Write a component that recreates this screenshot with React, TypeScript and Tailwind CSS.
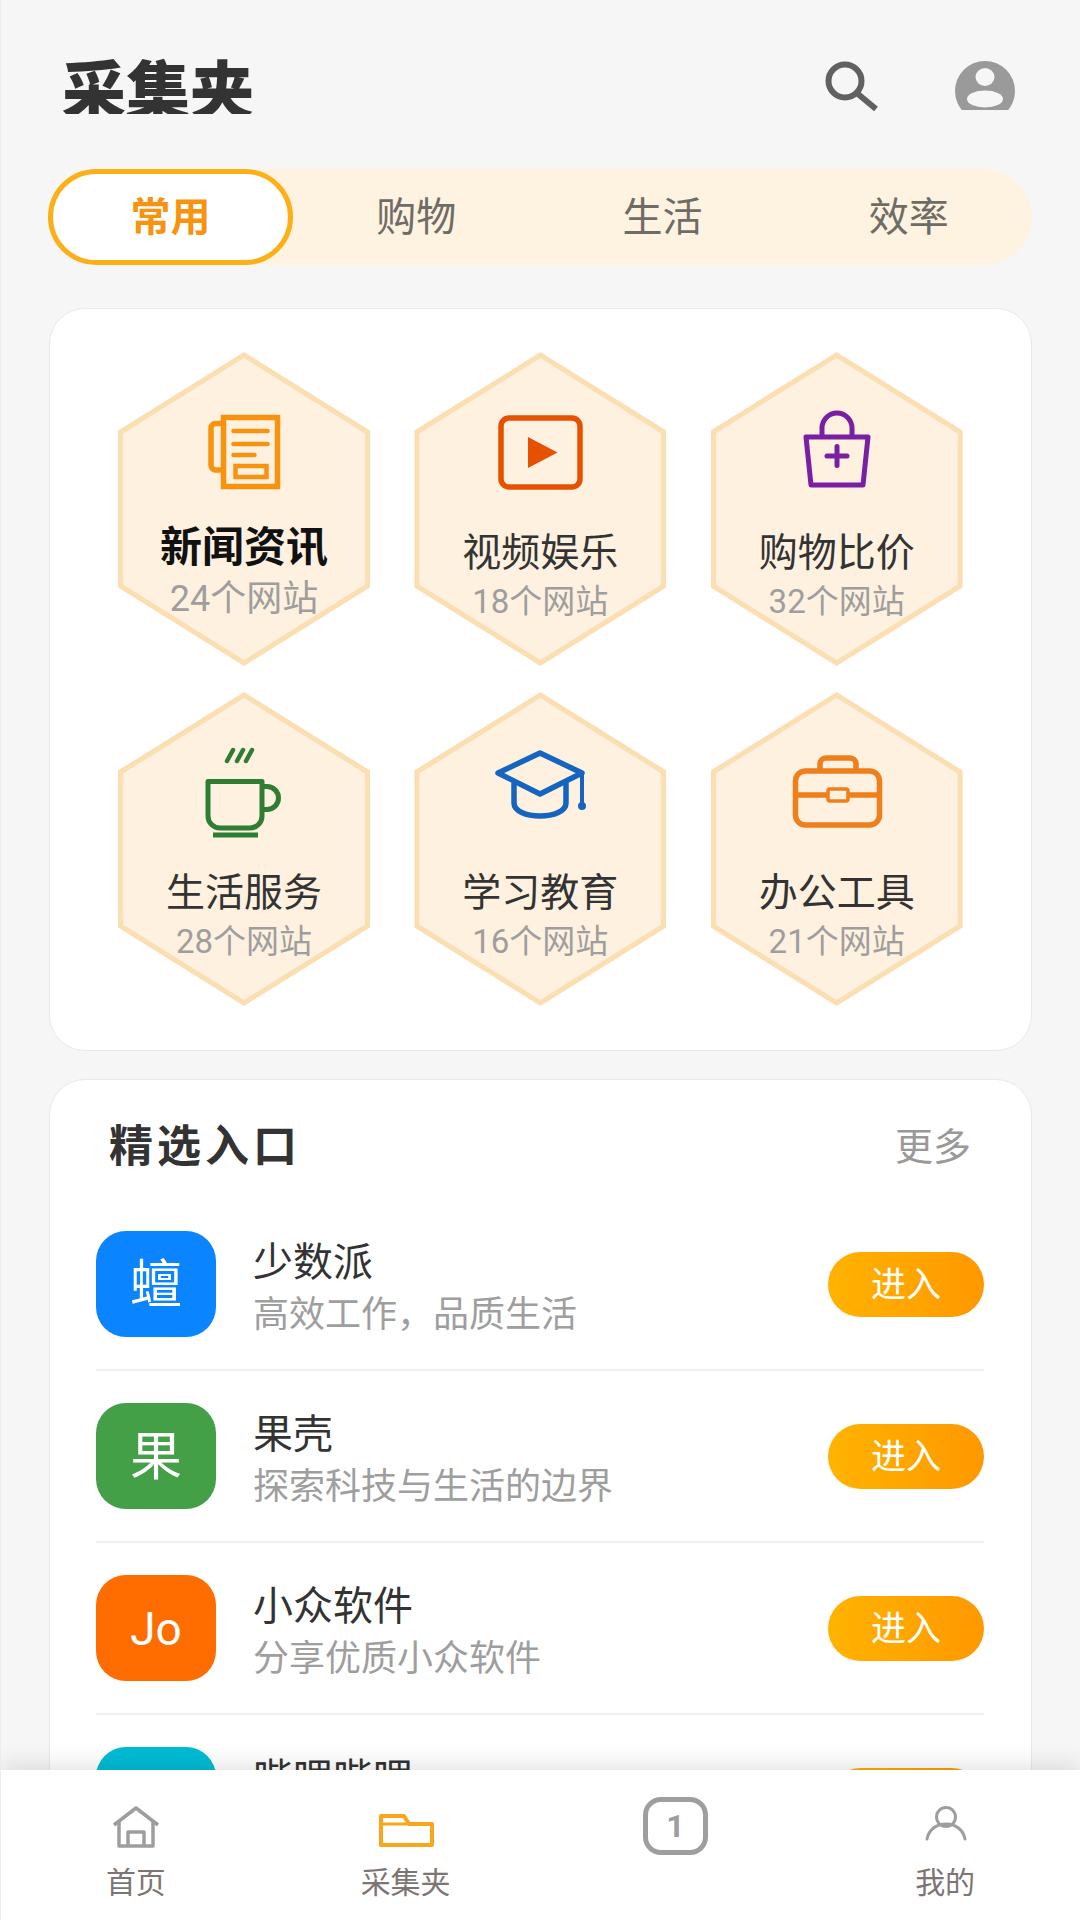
import type { ReactNode } from 'react';

function NewsIcon() {
  return (
    <svg viewBox="0 0 100 100" className="h-[100px] w-[100px]" fill="none" stroke="#f7930f" strokeWidth="5.500">
      <rect x="29.500" y="14.500" width="54" height="69" />
      <path d="M28 20.500H21a4.500 4.500 0 0 0-4 4.500V62a5 5 0 0 0 4 5h7" />
      <path d="M39.500 28h34M39.500 41h34M39.500 52h21" strokeWidth="4.500" strokeLinecap="round" />
      <rect x="41.500" y="63" width="31" height="11" strokeWidth="4.500" />
    </svg>
  );
}

function PlayIcon() {
  return (
    <svg viewBox="0 0 100 100" className="h-[100px] w-[100px]" fill="none" stroke="#e65100" strokeWidth="5.500">
      <rect x="11" y="15" width="79" height="69" rx="8" />
      <path d="M38 34 L67.500 49.500 L38 65Z" fill="#e65100" stroke="none" />
    </svg>
  );
}

function BagIcon() {
  return (
    <svg viewBox="0 0 100 100" className="h-[100px] w-[100px]" fill="none" stroke="#7b1fa2" strokeWidth="5" strokeLinejoin="round">
      <path d="M19 34H81L76 82H24Z" />
      <path d="M35 33V25a15 15 0 0 1 30 0V33" />
      <path d="M40 53H60M50 43.500V62.500" strokeLinecap="round" />
    </svg>
  );
}

function CupIcon() {
  return (
    <svg viewBox="0 0 100 100" className="h-[100px] w-[100px]" fill="none" stroke="#2e7d32" strokeWidth="5">
      <path d="M33 18l6-11M43 18l6-11M52 18l6-11" strokeLinecap="round" strokeWidth="4.500" />
      <path d="M14 38.500H68V73a12 12 0 0 1-12 12H26a12 12 0 0 1-12-12Z" strokeLinejoin="round" />
      <path d="M69 43.500h4a11 11 0 0 1 0 23h-4" />
      <path d="M19 92H64" />
    </svg>
  );
}

function CapIcon() {
  return (
    <svg viewBox="0 0 100 100" className="h-[100px] w-[100px]" fill="none" stroke="#1565c0" strokeWidth="5.500" strokeLinejoin="round">
      <path d="M8 30 50 10 92 30 50 51Z" />
      <path d="M24 40V60C24 68 36 73 50 73S76 68 76 60V40" />
      <path d="M92 30V60" strokeWidth="4" />
      <circle cx="92" cy="63" r="4" fill="#1565c0" stroke="none" />
    </svg>
  );
}

function CaseIcon() {
  return (
    <svg viewBox="0 0 100 100" className="h-[100px] w-[100px]" fill="none" stroke="#ee7f1b" strokeWidth="5.500">
      <rect x="8.500" y="28" width="84" height="54" rx="10" />
      <path d="M33 27V21a6 6 0 0 1 6-6H63a6 6 0 0 1 6 6v6" />
      <path d="M9 52H40M61 52H92" />
      <rect x="41" y="46" width="20" height="12" rx="2" strokeWidth="3.500" />
    </svg>
  );
}

const categories = [
  { name: '新闻资讯', count: '24个网站', icon: <NewsIcon />, active: true },
  { name: '视频娱乐', count: '18个网站', icon: <PlayIcon /> },
  { name: '购物比价', count: '32个网站', icon: <BagIcon /> },
  { name: '生活服务', count: '28个网站', icon: <CupIcon /> },
  { name: '学习教育', count: '16个网站', icon: <CapIcon /> },
  { name: '办公工具', count: '21个网站', icon: <CaseIcon /> },
];

const entries = [
  { letter: '蟺', name: '少数派', desc: '高效工作，品质生活', color: 'bg-[#0a84ff] text-[52px]' },
  { letter: '果', name: '果壳', desc: '探索科技与生活的边界', color: 'bg-[#43a047] text-[52px]' },
  { letter: 'Jo', name: '小众软件', desc: '分享优质小众软件', color: 'bg-[#ff6d00] text-[46px]' },
  { letter: '哔', name: '哔哩哔哩', desc: '', color: 'bg-[#00bcd4] text-[52px]' },
];

function Hexagon({ name, count, icon, active }: { name: string; count: string; icon: ReactNode; active?: boolean }) {
  return (
    <div className="relative h-[314px] w-[252px] bg-[#fbdfb3] [clip-path:polygon(50%_0,100%_25%,100%_75%,50%_100%,0_75%,0_25%)]">
      <div className="absolute inset-x-[5px] inset-y-[6px] bg-[#fef1e0] [clip-path:polygon(50%_0,100%_25%,100%_75%,50%_100%,0_75%,0_25%)]" />
      <div className="relative flex flex-col items-center pt-[51px]">
        {icon}
        {active ? (
          <>
            <div className="mt-[20px] h-[50px] text-[42px] font-bold leading-[50px] text-[#111]">{name}</div>
            <div className="h-[52px] text-[36px] leading-[52px] text-[#9e9e9e]">{count}</div>
          </>
        ) : (
          <>
            <div className="mt-[25px] h-[50px] text-[39px] leading-[50px] text-[#333]">{name}</div>
            <div className="h-[48px] text-[33px] leading-[48px] text-[#9e9e9e]">{count}</div>
          </>
        )}
      </div>
    </div>
  );
}

function EntryRow({ letter, name, desc, color, last }: { letter: string; name: string; desc: string; color: string; last?: boolean }) {
  return (
    <div className={`flex items-center py-[32px] ${last ? '' : 'border-b-2 border-[#f0f0f0]'}`}>
      <div className={`flex h-[106px] w-[120px] items-center justify-center rounded-[30px] pt-[3px] text-white ${color}`}>
        {letter}
      </div>
      <div className="ml-[37px] h-[106px] flex-1 pt-[7px]">
        <div className="h-[50px] text-[40px] leading-[50px] text-[#333]">{name}</div>
        <div className="h-[49px] text-[36px] leading-[54px] text-[#9e9e9e]">{desc}</div>
      </div>
      <button className="h-[65px] w-[156px] rounded-full bg-gradient-to-r from-[#ffb300] to-[#ff9800] pt-[3px] text-[35px] leading-[62px] text-white">
        进入
      </button>
    </div>
  );
}

export default function App() {
  return (
    <div className="relative flex h-[1920px] w-[1080px] flex-col overflow-hidden border-l border-[#ececec] bg-[#f6f6f6] font-['Roboto','Noto_Sans_CJK_SC',sans-serif]">
      <div className="flex min-h-0 flex-1 flex-col overflow-hidden">
        {/* Header, clipped at the bottom as in the capture */}
        <div className="flex h-[114px] shrink-0 items-start justify-between overflow-hidden pl-[61px] pr-[65px] pt-[58px]">
          <h1 className="mt-[3px] text-[64px] font-black leading-[64px] text-[#333]">采集夹</h1>
          <div className="flex items-start gap-[76px]">
            <svg width="56" height="52" viewBox="0 0 56 52" fill="none" stroke="#616161" className="mt-[2px]">
              <circle cx="22" cy="21" r="16.500" strokeWidth="6" />
              <path d="M35 34 53 49" strokeWidth="6" />
            </svg>
            <svg width="60" height="49" viewBox="0 0 60 49" className="mt-[3px]">
              <circle cx="30" cy="30" r="30" fill="#9a9a9a" />
              <ellipse cx="30" cy="16" rx="9.500" ry="9" fill="#f6f6f6" />
              <ellipse cx="30" cy="38" rx="18" ry="8.500" fill="#f6f6f6" />
            </svg>
          </div>
        </div>

        {/* Tabs */}
        <div className="ml-[47px] mt-[55px] flex h-[96px] w-[984px] shrink-0 rounded-full bg-[#fdf3e0]">
          <div className="flex w-[245px] items-center justify-center rounded-full border-[5px] border-[#fbb018] bg-white pt-px text-[40px] font-bold text-[#f7930f]">
            常用
          </div>
          <div className="flex flex-1 items-center justify-center pt-px text-[40px] text-[#6f6b66]">购物</div>
          <div className="flex flex-1 items-center justify-center pt-px text-[40px] text-[#6f6b66]">生活</div>
          <div className="flex flex-1 items-center justify-center pt-px text-[40px] text-[#6f6b66]">效率</div>
        </div>

        {/* Category card */}
        <div className="ml-[48px] mt-[43px] w-[983px] shrink-0 rounded-[36px] border border-[#e9e9e9] bg-white px-[68px] pb-[44px] pt-[43px]">
          <div className="grid grid-cols-3 gap-x-[44px] gap-y-[26px]">
            {categories.map((c) => (
              <Hexagon key={c.name} {...c} />
            ))}
          </div>
        </div>

        {/* Featured entries */}
        <div className="ml-[48px] mt-[28px] w-[983px] shrink-0 rounded-[36px] border border-[#e9e9e9] bg-white pl-[46px] pr-[47px]">
          <div className="flex h-[119px] items-start justify-between px-[13px] pt-[37px]">
            <div className="text-[44px] font-bold leading-[60px] tracking-[4px] text-[#333]">精选入口</div>
            <div className="text-[38px] leading-[60px] text-[#999]">更多</div>
          </div>
          {entries.map((e, i) => (
            <EntryRow key={e.name} {...e} last={i === entries.length - 1} />
          ))}
        </div>
      </div>

      {/* Bottom nav */}
      <div className="relative flex h-[150px] shrink-0 bg-white pt-[27px] shadow-[0_-4px_24px_rgba(0,0,0,0.12)]">
        <div className="flex flex-1 flex-col items-center">
          <svg width="60" height="60" viewBox="0 0 60 60" fill="none" stroke="#9e9e9e" strokeWidth="3.500" strokeLinejoin="round">
            <path d="M8 28 30 11 52 28" />
            <path d="M13 25V49H47V25" />
            <path d="M22 49V35H38V49" />
          </svg>
          <div className="mt-px h-[50px] text-[30px] leading-[50px] text-[#7d7573]">首页</div>
        </div>
        <div className="flex flex-1 flex-col items-center">
          <svg width="60" height="60" viewBox="0 0 60 60" fill="none" stroke="#f9a61a" strokeWidth="4" strokeLinejoin="round">
            <path d="M5 19H28L33 27H56V48H5Z" />
            <path d="M5 27H33" strokeWidth="3" />
          </svg>
          <div className="mt-px h-[50px] text-[30px] leading-[50px] text-[#7d7573]">采集夹</div>
        </div>
        <div className="flex flex-1 flex-col items-center">
          <div className="flex h-[58px] w-[65px] items-center justify-center rounded-[18px] border-[5px] border-[#9e9e9e] text-[32px] font-bold text-[#9e9e9e]">
            1
          </div>
        </div>
        <div className="flex flex-1 flex-col items-center">
          <svg width="60" height="60" viewBox="0 0 60 60" fill="none" stroke="#9e9e9e" strokeWidth="3">
            <circle cx="31" cy="20" r="9.500" />
            <path d="M12 42C14 32 22 27 31 27S48 32 50 42" strokeLinecap="round" />
          </svg>
          <div className="mt-px h-[50px] text-[30px] leading-[50px] text-[#7d7573]">我的</div>
        </div>
      </div>
    </div>
  );
}
